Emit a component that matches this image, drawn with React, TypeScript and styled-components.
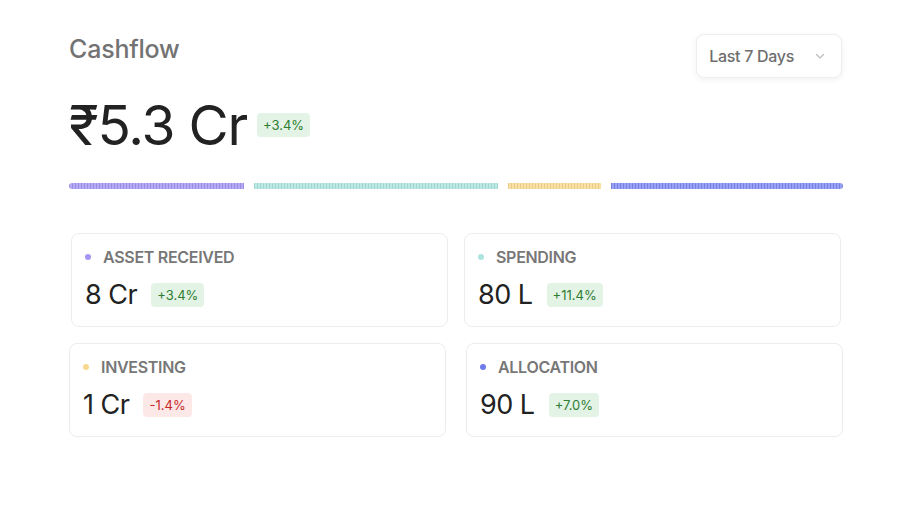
import React from "react";
import styled, { createGlobalStyle } from "styled-components";

const GlobalStyle = createGlobalStyle`
	html, body {
		margin: 0;
		padding: 0;
		background: #ffffff;
		font-family: Inter, "Noto Sans", "Liberation Sans", sans-serif;
		color: #1f1f1f;
	}
`;

const Page = styled.div`
	width: 774px;
	padding: 34px 0 0 69px;
`;

const Header = styled.header`
	display: flex;
	justify-content: space-between;
	align-items: flex-start;
`;

const Title = styled.h1`
	margin: 0;
	font-size: 25px;
	font-weight: 500;
	letter-spacing: -0.2px;
	color: #737373;
`;

const Dropdown = styled.button`
	display: flex;
	align-items: center;
	gap: 20px;
	height: 44px;
	padding: 0 15px 0 12px;
	margin-right: 1px;
	border: 1px solid #eeeeee;
	border-radius: 8px;
	background: #fff;
	box-shadow: 0 2px 6px rgba(0, 0, 0, 0.06);
	font-family: inherit;
	font-size: 16px;
	font-weight: 500;
	letter-spacing: -0.3px;
	color: #6e6e6e;
`;

const AmountRow = styled.div`
	display: flex;
	align-items: center;
	gap: 10px;
	margin-top: 14px;
`;

const Amount = styled.div`
	font-size: 55px;
	font-weight: 400;
	letter-spacing: -1.2px;
	line-height: 66px;
	color: #222;
`;

const Badge = styled.span<{ $down?: boolean }>`
	display: inline-block;
	padding: 3px 6px;
	border-radius: 4px;
	font-size: 13px;
	line-height: 18px;
	background: ${(p) => (p.$down ? "#fde8e8" : "#e3f3e5")};
	color: ${(p) => (p.$down ? "#c62828" : "#2e7d32")};
`;

const Bar = styled.div`
	display: flex;
	gap: 10px;
	margin-top: 25px;
	height: 6px;
`;

const Segment = styled.div<{ $color: string; $grow: number }>`
	flex: ${(p) => p.$grow} 1 0;
	height: 100%;
	background-color: ${(p) => p.$color};
	background-image: repeating-linear-gradient(
		90deg,
		rgba(0, 0, 0, 0.06) 0 1px,
		rgba(255, 255, 255, 0.2) 1px 3px
	);
	&:first-child {
		border-radius: 3px 0 0 3px;
	}
	&:last-child {
		border-radius: 0 3px 3px 0;
	}
`;

const Grid = styled.div`
	display: grid;
	grid-template-columns: 1fr 1fr;
	column-gap: 20px;
	row-gap: 16px;
	margin-top: 44px;
`;

const Card = styled.div<{ $shift: number }>`
	height: 94px;
	box-sizing: border-box;
	padding: 13px 13px;
	border: 1px solid #ececec;
	border-radius: 8px;
	background: #fff;
	transform: translateX(${(p) => p.$shift}px);
`;

const Label = styled.div`
	display: flex;
	align-items: center;
	gap: 12px;
	font-size: 16px;
	font-weight: 600;
	letter-spacing: -0.3px;
	color: #777;
`;

const Dot = styled.span<{ $color: string }>`
	width: 6px;
	height: 6px;
	border-radius: 50%;
	background: ${(p) => p.$color};
`;

const ValueRow = styled.div`
	display: flex;
	align-items: center;
	gap: 14px;
	margin-top: 12px;
`;

const Value = styled.div`
	font-size: 27px;
	letter-spacing: -0.5px;
	color: #222;
	line-height: 32px;
`;

const segments = [
	{ color: "#a395f2", grow: 175 },
	{ color: "#ace3de", grow: 244 },
	{ color: "#f8d88f", grow: 93 },
	{ color: "#7e8af0", grow: 232 },
];

const cards = [
	{ label: "ASSET RECEIVED", value: "8 Cr", change: "+3.4%", color: "#a395f2", shift: 2 },
	{ label: "SPENDING", value: "80 L", change: "+11.4%", color: "#ace3de", shift: -2 },
	{ label: "INVESTING", value: "1 Cr", change: "-1.4%", color: "#f8d88f", shift: 0, down: true },
	{ label: "ALLOCATION", value: "90 L", change: "+7.0%", color: "#6f7be8", shift: 0 },
];

const Chevron = () => (
	<svg width="12" height="12" viewBox="0 0 24 24" fill="none" stroke="#bdbdbd" strokeWidth="2.4" strokeLinecap="round" strokeLinejoin="round">
		<path d="M5 9l7 7 7-7" />
	</svg>
);

export default function App() {
	return (
		<>
			<GlobalStyle />
			<Page>
				<Header>
					<Title>Cashflow</Title>
					<Dropdown>
						Last 7 Days
						<Chevron />
					</Dropdown>
				</Header>
				<AmountRow>
					<Amount>₹5.3 Cr</Amount>
					<Badge>+3.4%</Badge>
				</AmountRow>
				<Bar>
					{segments.map((s) => (
						<Segment key={s.color} $color={s.color} $grow={s.grow} />
					))}
				</Bar>
				<Grid>
					{cards.map((c) => (
						<Card key={c.label} $shift={c.shift}>
							<Label>
								<Dot $color={c.color} />
								{c.label}
							</Label>
							<ValueRow>
								<Value>{c.value}</Value>
								<Badge $down={c.down}>{c.change}</Badge>
							</ValueRow>
						</Card>
					))}
				</Grid>
			</Page>
		</>
	);
}
